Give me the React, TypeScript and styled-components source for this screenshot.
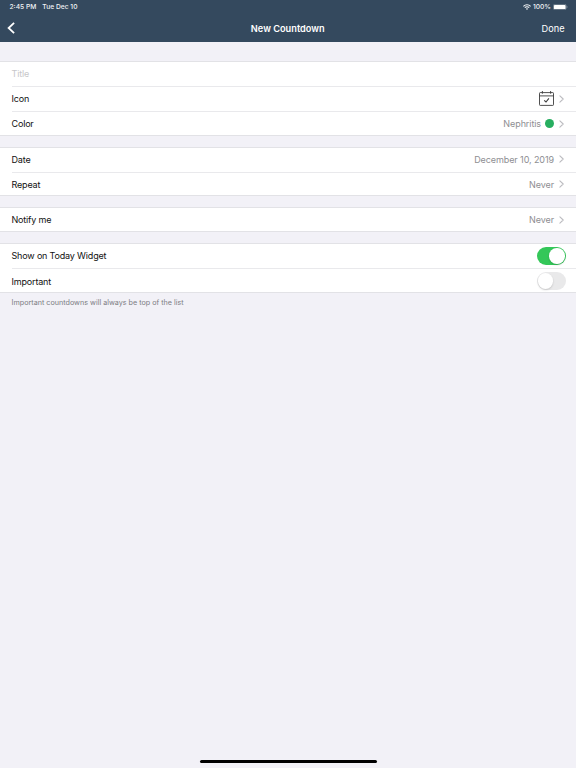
import React from "react";
import styled, { createGlobalStyle } from "styled-components";

const GlobalStyle = createGlobalStyle`
  * { box-sizing: border-box; }
  html, body { margin: 0; padding: 0; background: #f2f1f7; overflow: hidden; }
  body { font-family: Inter, "Liberation Sans", sans-serif; font-size: 9px; color: #111; }
`;

const Screen = styled.div`
  display: flex;
  flex-direction: column;
  width: 576px;
  height: 768px;
  background: #f2f1f7;
`;

const Header = styled.header`
  height: 42px;
  background: #34495e;
  color: #fff;
`;

const StatusBar = styled.div`
  display: flex;
  justify-content: space-between;
  align-items: center;
  height: 14px;
  padding: 0 8px 0 9.5px;
  font-size: 6.7px;
  font-weight: 500;
  color: #f0f3f5;
`;

const StatusGroup = styled.div<{ $gap: number }>`
  display: flex;
  align-items: center;
  gap: ${(p) => p.$gap}px;
  white-space: nowrap;
`;

const NavBar = styled.nav`
  display: grid;
  grid-template-columns: 1fr auto 1fr;
  align-items: center;
  height: 28px;
  padding: 0 11.5px 0 7px;
`;

const NavTitle = styled.h1`
  margin: 0 0 0 4px;
  font-size: 9.2px;
  font-weight: 600;
  letter-spacing: 0.02px;
`;

const NavButton = styled.button<{ $end?: boolean }>`
  display: flex;
  justify-self: ${(p) => (p.$end ? "end" : "start")};
  padding: 0;
  border: 0;
  background: none;
  color: #fff;
  font: inherit;
  font-size: 9.2px;
`;

const Form = styled.main`
  display: flex;
  flex-direction: column;
  gap: 11px;
  padding-top: 19px;
`;

const Section = styled.section`
  background: #fff;
  box-shadow: inset 0 1px #e2e2e6, inset 0 -1px #e2e2e6;
`;

const Row = styled.div`
  display: flex;
  margin-left: 11.5px;
  padding-right: 10.5px;
  height: 25px;
  align-items: center;
  justify-content: space-between;
  white-space: nowrap;
  & + & { border-top: 1px solid #e9e9ec; height: 24.75px; }
`;

const Label = styled.span<{ $muted?: boolean }>`
  color: ${(p) => (p.$muted ? "#c7c7c9" : "#111")};
  letter-spacing: -0.17px;
`;

const Value = styled.div`
  display: flex;
  align-items: center;
  color: #8e8e92;
  letter-spacing: -0.09px;
`;

const Dot = styled.span`
  width: 9px;
  height: 9px;
  margin-left: 4px;
  border-radius: 50%;
  background: #27ae60;
`;

const Toggle = styled.span<{ $on?: boolean }>`
  display: flex;
  align-items: center;
  justify-content: ${(p) => (p.$on ? "flex-end" : "flex-start")};
  width: 29px;
  height: 17.5px;
  padding: 1px;
  border-radius: 9px;
  background: ${(p) => (p.$on ? "#34c759" : "#e9e9ea")};
`;

const Knob = styled.span`
  width: 15.5px;
  height: 15.5px;
  border-radius: 50%;
  background: #fff;
  box-shadow: 0 1px 2px rgba(0, 0, 0, 0.16);
`;

const Footnote = styled.p`
  margin: -6.5px 0 0 11.5px;
  font-size: 7.2px;
  line-height: 9px;
  color: #7c7c82;
`;

const HomeIndicator = styled.div`
  width: 177px;
  height: 3px;
  margin: auto auto 5px 199.5px;
  border-radius: 2px;
  background: #000;
`;

const ChevronSvg = styled.svg`
  display: block;
  margin: 0 1.5px 0 5px;
`;

const Chevron = () => (
  <ChevronSvg width="5" height="8" viewBox="0 0 5 8" fill="none" stroke="#bcbcc0" strokeWidth="1.1" strokeLinecap="round" strokeLinejoin="round">
    <path d="M.9 .9 4.2 4 .9 7.1" />
  </ChevronSvg>
);

const BackIcon = () => (
  <svg width="8" height="12" viewBox="0 0 8 12" fill="none" stroke="#fff" strokeWidth="1.8">
    <path d="M7.1 .8 1.6 6l5.5 5.2" />
  </svg>
);

const CalendarIcon = () => (
  <svg width="15" height="15" viewBox="0 0 15 15" fill="none" stroke="#3c3c3c" strokeWidth=".9">
    <rect x=".5" y="1.6" width="14" height="12.8" rx=".7" />
    <path d="M.5 4.9h14M3.4 0v2.7M11.6 0v2.7" />
    <path d="M5.2 9.4 7 11 9.9 7.4" strokeWidth="1.1" />
  </svg>
);

const WifiIcon = () => (
  <svg width="8" height="6" viewBox="0 0 8 6" fill="none" stroke="#f4f6f8" strokeWidth="1.1">
    <path d="M.4 2.3a5.1 5.1 0 0 1 7.2 0M1.8 3.7a3.1 3.1 0 0 1 4.4 0" />
    <path d="M2.9 4.7 4 5.9 5.1 4.7a1.6 1.6 0 0 0-2.2 0Z" fill="#f4f6f8" stroke="none" />
  </svg>
);

const BatteryIcon = () => (
  <svg width="15" height="6" viewBox="0 0 15 6">
    <rect x=".3" y=".3" width="12.9" height="5.4" rx="1.5" fill="none" stroke="#a4afb9" strokeWidth=".5" />
    <rect x=".9" y=".9" width="11.7" height="4.2" rx=".9" fill="#fff" />
    <path d="M13.8 2v2q.7-.3.7-1t-.7-1Z" fill="#a4afb9" />
  </svg>
);

export default function App() {
  return (
    <Screen>
      <GlobalStyle />
      <Header>
        <StatusBar>
          <StatusGroup $gap={6}><span>2:45 PM</span><span>Tue Dec 10</span></StatusGroup>
          <StatusGroup $gap={2}><WifiIcon /><span>100%</span><BatteryIcon /></StatusGroup>
        </StatusBar>
        <NavBar>
          <NavButton aria-label="Back"><BackIcon /></NavButton>
          <NavTitle>New Countdown</NavTitle>
          <NavButton $end>Done</NavButton>
        </NavBar>
      </Header>
      <Form>
        <Section>
          <Row><Label $muted>Title</Label></Row>
          <Row><Label>Icon</Label><Value><CalendarIcon /><Chevron /></Value></Row>
          <Row><Label>Color</Label><Value>Nephritis<Dot /><Chevron /></Value></Row>
        </Section>
        <Section>
          <Row><Label>Date</Label><Value>December 10, 2019<Chevron /></Value></Row>
          <Row><Label>Repeat</Label><Value>Never<Chevron /></Value></Row>
        </Section>
        <Section>
          <Row><Label>Notify me</Label><Value>Never<Chevron /></Value></Row>
        </Section>
        <Section>
          <Row><Label>Show on Today Widget</Label><Toggle $on><Knob /></Toggle></Row>
          <Row><Label>Important</Label><Toggle><Knob /></Toggle></Row>
        </Section>
        <Footnote>Important countdowns will always be top of the list</Footnote>
      </Form>
      <HomeIndicator />
    </Screen>
  );
}
